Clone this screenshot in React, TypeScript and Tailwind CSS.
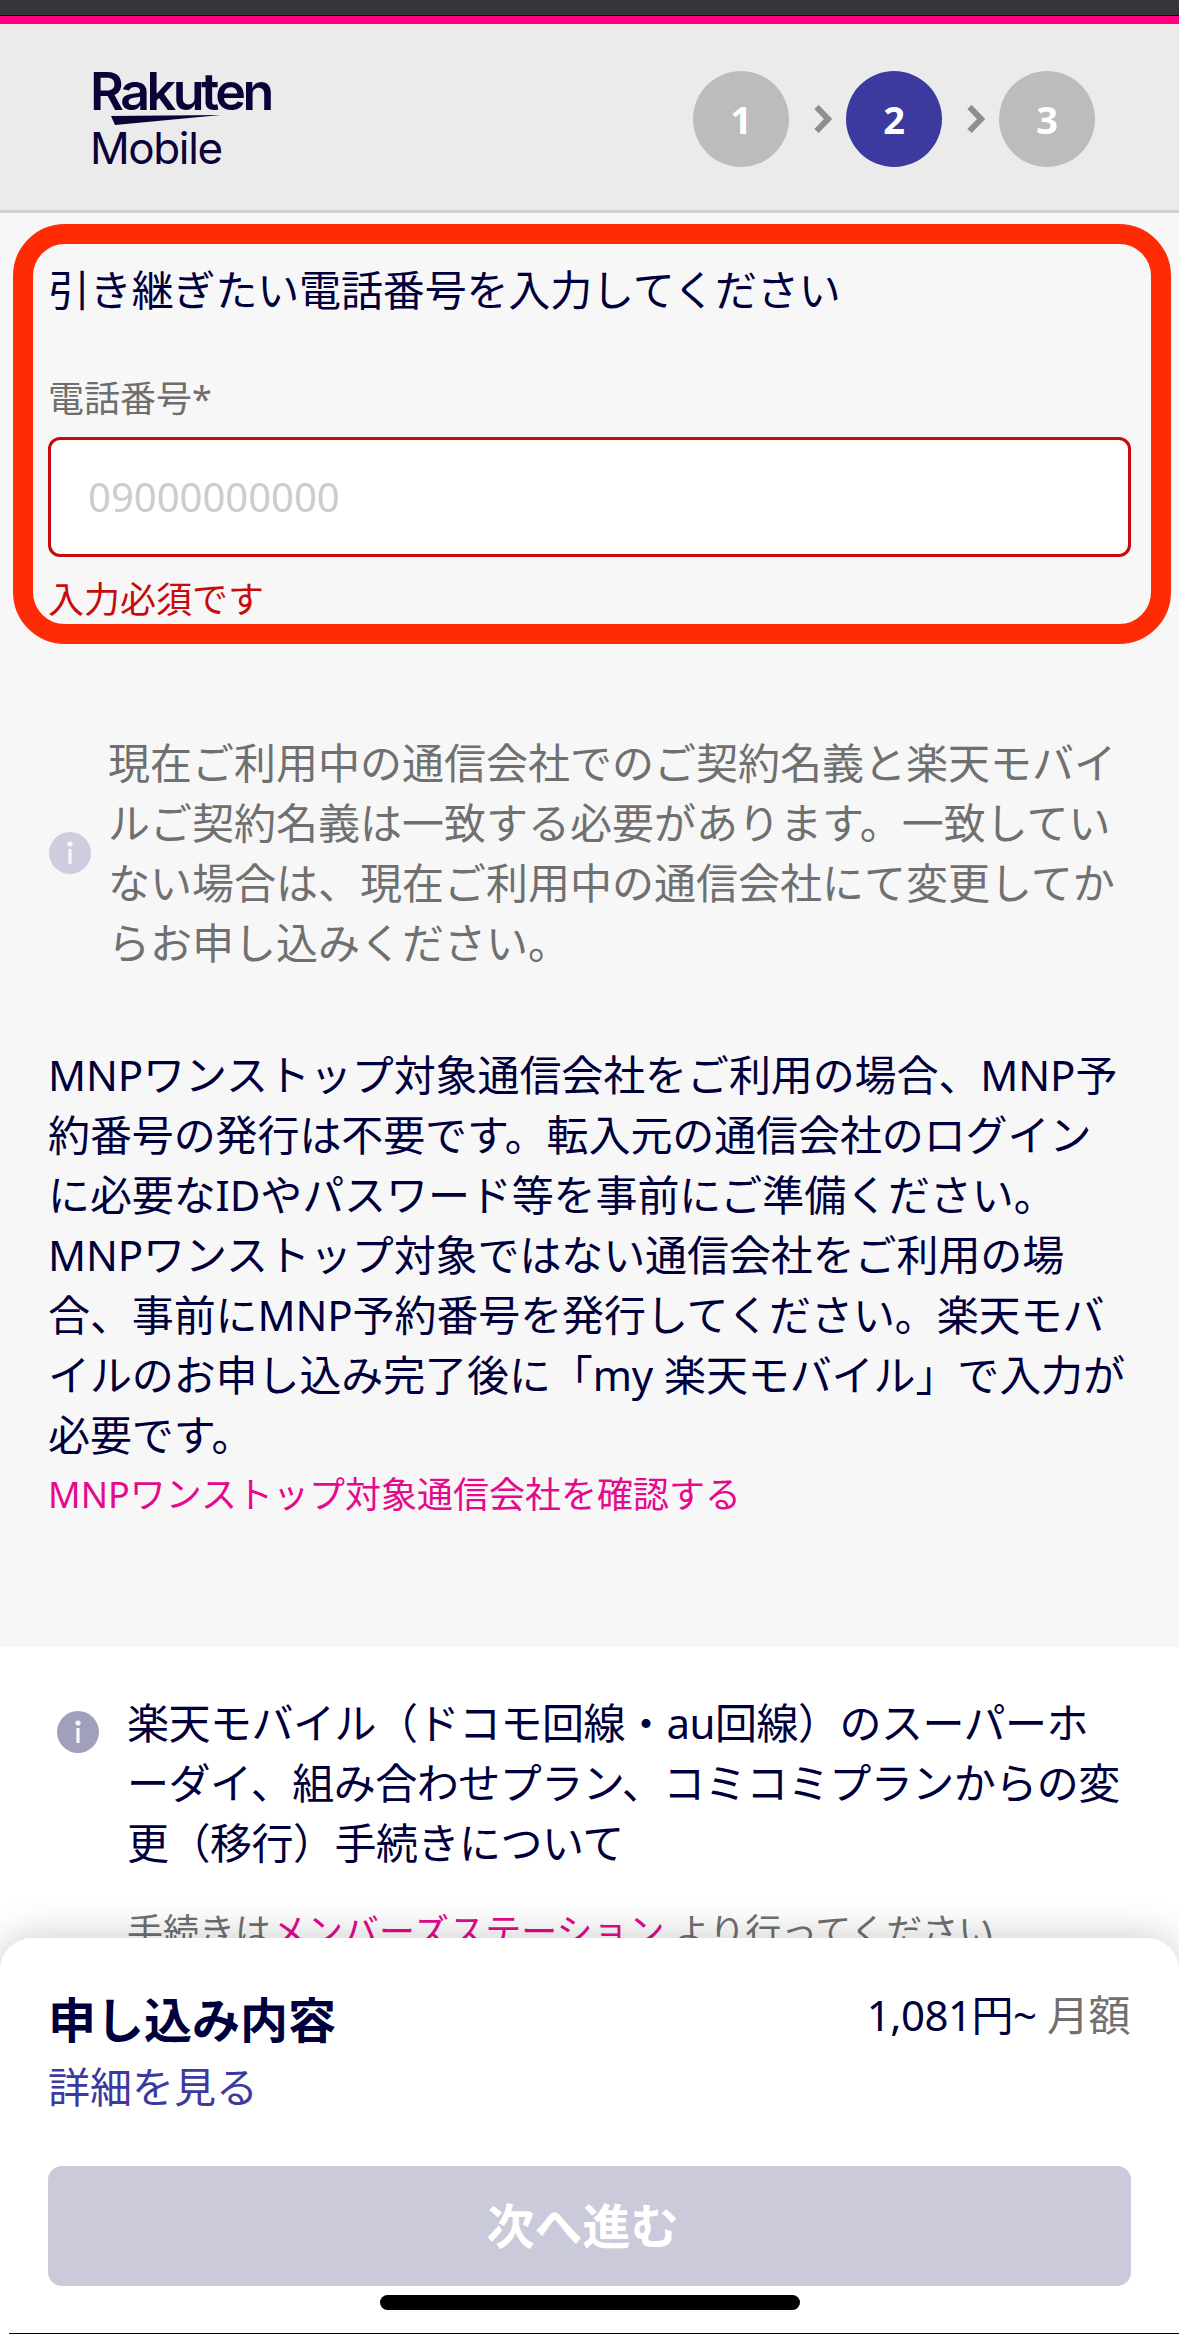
const jp = "font-['Noto_Sans','Noto_Sans_CJK_JP',sans-serif]";

function InfoIcon({ fill }: { fill: string }) {
  return (
    <svg viewBox="0 0 42 42" className="w-[42px] h-[42px] shrink-0">
      <circle cx="21" cy="21" r="21" fill={fill} />
      <circle cx="21" cy="12" r="2.6" fill="#f7f7f7" />
      <rect x="19.4" y="17" width="3.2" height="15" fill="#f7f7f7" />
    </svg>
  );
}

function Chevron({ className }: { className: string }) {
  return (
    <svg viewBox="0 0 18 28" className={`w-[18px] h-[28px] ${className}`}>
      <path d="M2.5 2 L14 14 L2.5 26" fill="none" stroke="#8e8e8e" strokeWidth="6" />
    </svg>
  );
}

function Step({ n, active }: { n: number; active?: boolean }) {
  return (
    <div
      className={`w-[96px] h-[96px] rounded-full flex items-center justify-center text-white font-bold text-[38px] font-['Open_Sans',sans-serif] ${
        active ? "bg-[#3c399f]" : "bg-[#bcbcbc]"
      }`}
    >
      {n}
    </div>
  );
}

function Logo() {
  return (
    <div className="w-[177px] -ml-[3px] text-[#0b0238] font-['Inter',sans-serif]">
      <div className="text-[52px] leading-[40px] font-semibold tracking-[-3.5px] whitespace-nowrap">Rakuten</div>
      <svg viewBox="0 0 110 10" className="w-[110px] h-[10px] ml-[21px] mt-[3px]">
        <path d="M0 1 L110 0 L4 10 Z" fill="#0b0238" />
      </svg>
      <div className="text-[44px] leading-[38px] mt-[4px] tracking-[-1.4px] whitespace-nowrap">Mobile</div>
    </div>
  );
}

export default function App() {
  return (
    <div className={`relative w-[1179px] h-[2334px] overflow-hidden bg-[#f7f7f7] ${jp}`}>
      <div className="h-[15px] bg-[#33353a]" />
      <div className="h-px bg-black" />
      <div className="h-[8px] bg-[#ff0081]" />

      <header className="h-[189px] bg-[#ebebeb] border-b-[3px] border-[#d0d0d0] flex items-center justify-between pl-[93px] pr-[84px] pt-[4px]">
        <Logo />
        <div className="flex items-center">
          <Step n={1} />
          <Chevron className="ml-[25px] mr-[14px]" />
          <Step n={2} active />
          <Chevron className="ml-[25px] mr-[14px]" />
          <Step n={3} />
        </div>
      </header>

      <main className="pl-[48px] pr-[48px] h-[1434px]">
        <h1 className="pt-[47px] text-[42px] leading-[60px] tracking-[-0.15px] text-[#00003c] font-normal">
          引き継ぎたい電話番号を入力してください
        </h1>
        <label className="block mt-[54px] text-[36px] leading-[50px] text-[#6e6e6e]">電話番号*</label>
        <div className="mt-[13px] h-[120px] w-[1083px] bg-white border-[3px] border-[#c80a0a] rounded-[12px] flex items-center pl-[37px] text-[40px] text-[#cccccc]">
          09000000000
        </div>
        <p className="mt-[18px] text-[36px] leading-[50px] text-[#c80a0a]">入力必須です</p>

        <div className="mt-[108px] ml-[1px] flex items-center">
          <div className="mr-[17px]">
            <InfoIcon fill="#cdcddf" />
          </div>
          <p className="w-[1020px] text-[42px] leading-[60px] text-[#707070]">
            現在ご利用中の通信会社でのご契約名義と楽天モバイルご契約名義は一致する必要があります。一致していない場合は、現在ご利用中の通信会社にて変更してからお申し込みください。
          </p>
        </div>

        <p className="mt-[72px] text-[42px] leading-[60px] text-[#00003c] tracking-[-0.1px]">
          MNPワンストップ対象通信会社をご利用の場合、MNP予約番号の発行は不要です。転入元の通信会社のログインに必要なIDやパスワード等を事前にご準備ください。
          <br />
          MNPワンストップ対象ではない通信会社をご利用の場合、事前にMNP予約番号を発行してください。楽天モバイルのお申し込み完了後に「my 楽天モバイル」で入力が必要です。
        </p>
        <a className="block text-[36px] leading-[60px] text-[#e5098e]">MNPワンストップ対象通信会社を確認する</a>
      </main>

      <section className="bg-white h-[687px] pl-[57px] pr-[40px] pt-[46px]">
        <div className="flex items-start">
          <div className="mt-[18px] mr-[28px]">
            <InfoIcon fill="#a0a0bd" />
          </div>
          <div className="w-[1002px]">
            <p className="text-[42px] leading-[60px] tracking-[-0.5px] text-[#00003c]">
              楽天モバイル（ドコモ回線・au回線）のスーパーホーダイ、組み合わせプラン、コミコミプランからの変更（移行）手続きについて
            </p>
            <p className="mt-[29px] text-[36px] leading-[60px] text-[#707070]">
              手続きは<a className="text-[#e5098e]">メンバーズステーション</a> より行ってください
            </p>
          </div>
        </div>
      </section>

      {/* red marker drawn on top of the form */}
      <div className="absolute left-[13px] top-[224px] w-[1158px] h-[420px] border-[20px] border-[#ff2b05] rounded-[52px]" />

      <div className="absolute left-0 top-[1938px] w-[1179px] h-[396px] bg-white rounded-t-[32px] shadow-[0_0_40px_rgba(0,0,0,0.22)] flex flex-col">
        <div className="pl-[48px] pr-[49px] pt-[47px] flex justify-between items-start">
          <div className="text-[48px] leading-[70px] font-bold text-[#00003c]">申し込み内容</div>
          <div className="text-[42px] leading-[60px] tracking-[-0.5px] text-[#00003c]">
            1,081円~ <span className="text-[#707070]">月額</span>
          </div>
        </div>
        <a className="block pl-[48px] mt-[2px] text-[42px] leading-[60px] text-[#3c399f]">詳細を見る</a>
        <button className="mx-[48px] pr-[14px] mt-[49px] h-[120px] shrink-0 rounded-[14px] bg-[#cacadb] text-white text-[48px] font-bold">
          次へ進む
        </button>
        <div className="mx-auto mt-[9px] w-[420px] h-[15px] rounded-full bg-black shrink-0" />
        <div className="ml-[9px] mt-[23px] h-px bg-black shrink-0" />
      </div>
    </div>
  );
}
